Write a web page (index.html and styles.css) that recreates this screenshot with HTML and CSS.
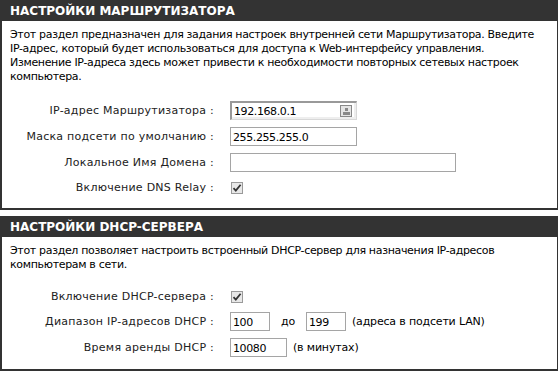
FILE: index.html
```html
<!DOCTYPE html>
<html>
    <head>
        <title>Настройки сети</title>
        <link rel="stylesheet" href="styles.css">
    </head>
    <body>
        <!-- Router settings -->
        <div class="panel">
            <h2 class="panel-title">НАСТРОЙКИ МАРШРУТИЗАТОРА</h2>
            <div class="panel-body">
                <p class="intro">Этот раздел предназначен для задания настроек внутренней сети Маршрутизатора. Введите<br>IP-адрес, который будет использоваться для доступа к Web-интерфейсу управления.<br>Изменение IP-адреса здесь может привести к необходимости повторных сетевых настроек<br>компьютера.</p>
                <div class="rows">
                    <div class="row">
                        <label for="lanIp">IP-адрес Маршрутизатора :</label>
                        <div class="field field-ip">
                            <input type="text" id="lanIp" class="txt txt-mid" value="192.168.0.1">
                            <span class="fill-icon"></span>
                        </div>
                    </div>
                    <div class="row">
                        <label for="lanMask">Маска подсети по умолчанию :</label>
                        <input type="text" id="lanMask" class="txt txt-mid" value="255.255.255.0">
                    </div>
                    <div class="row">
                        <label for="domain">Локальное Имя Домена :</label>
                        <input type="text" id="domain" class="txt txt-long" value="">
                    </div>
                    <div class="row row-check">
                        <label for="dnsRelay">Включение DNS Relay :</label>
                        <span class="check" id="dnsRelay" role="checkbox" aria-checked="true">
                            <svg width="12" height="12" viewBox="0 0 12 12"><path d="M2.5 6.2 L4.8 8.6 L9.6 2.8" fill="none" stroke="#333" stroke-width="1.8"/></svg>
                        </span>
                    </div>
                </div>
            </div>
        </div>

        <!-- DHCP server -->
        <div class="panel">
            <h2 class="panel-title">НАСТРОЙКИ DHCP-СЕРВЕРА</h2>
            <div class="panel-body">
                <p class="intro intro-short">Этот раздел позволяет настроить встроенный DHCP-сервер для назначения IP-адресов<br>компьютерам в сети.</p>
                <div class="rows">
                    <div class="row row-check">
                        <label for="dhcpOn">Включение DHCP-сервера :</label>
                        <span class="check" id="dhcpOn" role="checkbox" aria-checked="true">
                            <svg width="12" height="12" viewBox="0 0 12 12"><path d="M2.5 6.2 L4.8 8.6 L9.6 2.8" fill="none" stroke="#333" stroke-width="1.8"/></svg>
                        </span>
                    </div>
                    <div class="row">
                        <label for="rangeStart">Диапазон IP-адресов DHCP :</label>
                        <div class="field">
                            <input type="text" id="rangeStart" class="txt txt-short" value="100">
                            <span class="word">до</span>
                            <input type="text" id="rangeEnd" class="txt txt-short" value="199">
                            <span class="hint">(адреса в подсети LAN)</span>
                        </div>
                    </div>
                    <div class="row">
                        <label for="lease">Время аренды DHCP :</label>
                        <div class="field">
                            <input type="text" id="lease" class="txt txt-lease" value="10080">
                            <span class="hint">(в минутах)</span>
                        </div>
                    </div>
                </div>
            </div>
        </div>
    </body>
</html>
```

FILE: styles.css
```css
body {
    margin: 0;
    background: #fff;
    font-family: "DejaVu Sans", Tahoma, sans-serif;
    font-size: 11px;
    color: #000;
}

.panel {
    border-left: 2px solid #333;
    border-right: 1px solid #333;
    border-bottom: 2px solid #333;
    margin-bottom: 6px;
}

.panel-title {
    margin: 0;
    height: 21px;
    line-height: 22px;
    padding-left: 8px;
    background-color: #333;
    color: #fff;
    font-size: 12px;
    font-weight: bold;
    letter-spacing: 0;
}

.panel-body {
    padding: 7px 8px 12px;
}

.intro {
    margin: 0 0 17px;
    line-height: 14px;
    letter-spacing: -0.33px;
}

.intro-short {
    margin-bottom: 16px;
}

.rows {
    display: flex;
    flex-direction: column;
    gap: 7px;
}

.row {
    display: grid;
    grid-template-columns: 204px 1fr;
    column-gap: 16px;
    align-items: center;
    height: 19px;
}

.row-check {
    height: 17px;
}

.row label {
    text-align: right;
    color: #222;
    letter-spacing: 0.25px;
}

.field {
    display: flex;
    align-items: center;
}

.field-ip {
    position: relative;
    width: 127px;
}

.txt {
    box-sizing: border-box;
    height: 19px;
    margin: 0;
    padding: 1px 2px 0;
    border: 1px solid #a5a5a5;
    font-family: "DejaVu Sans", Tahoma, sans-serif;
    font-size: 11px;
    letter-spacing: -0.4px;
    color: #000;
    background: #fff;
}

.txt-mid {
    width: 127px;
}

.txt-long {
    width: 226px;
}

.txt-short {
    width: 40px;
}

.txt-lease {
    width: 57px;
}

.field-ip .txt {
    border: 1px solid #d8d8d8;
    border-top: 2px solid #999;
    border-left: 2px solid #999;
    background: #fff;
    box-shadow: inset 0 -2px 0 #eee, inset -2px 0 0 #eee;
}

.fill-icon {
    position: absolute;
    right: 5px;
    top: 4px;
    width: 10px;
    height: 10px;
    border: 1px solid #888;
    background: linear-gradient(#888, #888) 4px 2px / 3px 3px no-repeat,
                linear-gradient(#888, #888) 2px 6px / 7px 3px no-repeat,
                #e4e4e4;
}

.check {
    box-sizing: border-box;
    display: block;
    width: 12px;
    height: 12px;
    margin-left: 1px;
    border: 1px solid #9a9a9a;
    background: #e8e8e8;
}

.check svg {
    display: block;
    margin: -1px 0 0 -1px;
}

.word {
    margin: 0 11px;
    letter-spacing: -0.2px;
}

.hint {
    margin-left: 6px;
    letter-spacing: -0.17px;
}
```
